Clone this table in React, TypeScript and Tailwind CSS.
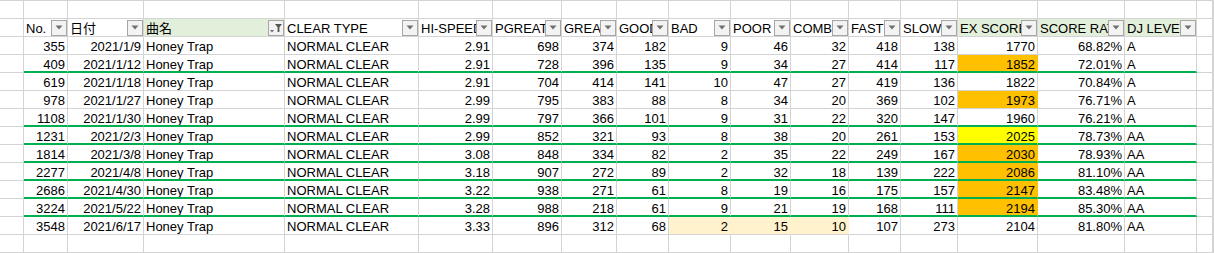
type Col = { label: string; right?: boolean; hl?: boolean; filtered?: boolean }

const COLS: Col[] = [
  { label: "No.", right: true },
  { label: "日付", right: true },
  { label: "曲名", hl: true, filtered: true },
  { label: "CLEAR TYPE" },
  { label: "HI-SPEED", right: true },
  { label: "PGREAT", right: true },
  { label: "GREAT", right: true },
  { label: "GOOD", right: true },
  { label: "BAD", right: true },
  { label: "POOR", right: true },
  { label: "COMBO BREAK", right: true },
  { label: "FAST", right: true },
  { label: "SLOW", right: true },
  { label: "EX SCORE", right: true, hl: true },
  { label: "SCORE RATE", right: true, hl: true },
  { label: "DJ LEVEL", hl: true },
]

type Row = { c: string[]; ex?: "orange" | "yellow"; tan?: boolean; line?: boolean }

const ROWS: Row[] = [
  { c: ["355", "2021/1/9", "Honey Trap", "NORMAL CLEAR", "2.91", "698", "374", "182", "9", "46", "32", "418", "138", "1770", "68.82%", "A"] },
  { c: ["409", "2021/1/12", "Honey Trap", "NORMAL CLEAR", "2.91", "728", "396", "135", "9", "34", "27", "414", "117", "1852", "72.01%", "A"], ex: "orange", line: true },
  { c: ["619", "2021/1/18", "Honey Trap", "NORMAL CLEAR", "2.91", "704", "414", "141", "10", "47", "27", "419", "136", "1822", "70.84%", "A"] },
  { c: ["978", "2021/1/27", "Honey Trap", "NORMAL CLEAR", "2.99", "795", "383", "88", "8", "34", "20", "369", "102", "1973", "76.71%", "A"], ex: "orange" },
  { c: ["1108", "2021/1/30", "Honey Trap", "NORMAL CLEAR", "2.99", "797", "366", "101", "9", "31", "22", "320", "147", "1960", "76.21%", "A"], line: true },
  { c: ["1231", "2021/2/3", "Honey Trap", "NORMAL CLEAR", "2.99", "852", "321", "93", "8", "38", "20", "261", "153", "2025", "78.73%", "AA"], ex: "yellow", line: true },
  { c: ["1814", "2021/3/8", "Honey Trap", "NORMAL CLEAR", "3.08", "848", "334", "82", "2", "35", "22", "249", "167", "2030", "78.93%", "AA"], ex: "orange", line: true },
  { c: ["2277", "2021/4/8", "Honey Trap", "NORMAL CLEAR", "3.18", "907", "272", "89", "2", "32", "18", "139", "222", "2086", "81.10%", "AA"], ex: "orange", line: true },
  { c: ["2686", "2021/4/30", "Honey Trap", "NORMAL CLEAR", "3.22", "938", "271", "61", "8", "19", "16", "175", "157", "2147", "83.48%", "AA"], ex: "orange", line: true },
  { c: ["3224", "2021/5/22", "Honey Trap", "NORMAL CLEAR", "3.28", "988", "218", "61", "9", "21", "19", "168", "111", "2194", "85.30%", "AA"], ex: "orange", line: true },
  { c: ["3548", "2021/6/17", "Honey Trap", "NORMAL CLEAR", "3.33", "896", "312", "68", "2", "15", "10", "107", "273", "2104", "81.80%", "AA"], tan: true },
]

const GRID =
  "grid grid-cols-[24px_44px_76px_141px_134px_74px_69px_55px_52px_62px_60px_58px_52px_57px_80px_87px_72px_16px_1fr] auto-rows-[18px]"

const blank = "h-[18px] border-r border-b border-r-[#d4d4d4] border-b-[#d4d4d4]"

function FilterButton({ active }: { active?: boolean }) {
  return (
    <span className="flex h-[16px] w-[16px] shrink-0 items-center justify-center self-center border border-[#a6a6a6] bg-[#f3f3f3]">
      {active ? (
        <svg width="14" height="12" viewBox="0 0 14 12">
          <path d="M1 8h4l-2 2.5z" fill="#6b6b6b" />
          <path d="M6 2h7l-2.6 3.2V10H8.6V5.2z" fill="#555" />
        </svg>
      ) : (
        <svg width="8" height="5" viewBox="0 0 8 5">
          <path d="M0.5 0.5h7L4 4.5z" fill="#707070" />
        </svg>
      )}
    </span>
  )
}

function EmptyRow() {
  return (
    <>
      {Array.from({ length: 19 }).map((_, i) => (
        <div key={i} className={blank} />
      ))}
    </>
  )
}

function HeaderRow() {
  return (
    <>
      <div className={blank} />
      {COLS.map((col) => (
        <div
          key={col.label}
          className={`flex h-[18px] items-start overflow-hidden border-r border-b border-r-[#d4d4d4] border-b-[#d4d4d4] pl-[2px] ${
            col.hl ? "bg-[#e2efda]" : "bg-white"
          }`}
        >
          <span className="min-w-0 flex-1 overflow-hidden whitespace-nowrap pt-[2px] leading-[16px]">{col.label}</span>
          <FilterButton active={col.filtered} />
        </div>
      ))}
      <div className={blank} />
      <div className={blank} />
    </>
  )
}

function DataRow({ row }: { row: Row }) {
  return (
    <>
      <div className={blank} />
      {row.c.map((v, i) => {
        const isEx = i === 13 && row.ex
        const isTan = row.tan && i >= 8 && i <= 10
        const fill = isEx ? (row.ex === "yellow" ? "bg-[#ffff00]" : "bg-[#ffc000]") : isTan ? "bg-[#fff2cc]" : ""
        const rightBorder = fill ? "border-r-transparent" : "border-r-[#d4d4d4]"
        const bottom = row.line ? "border-b-2 border-b-[#00b050]" : "border-b border-b-[#d4d4d4]"
        return (
          <div
            key={i}
            className={`h-[18px] overflow-hidden whitespace-nowrap border-r px-[2px] pt-[2px] leading-[16px] ${rightBorder} ${bottom} ${fill} ${
              COLS[i].right ? "text-right" : "text-left"
            }`}
          >
            {v}
          </div>
        )
      })}
      <div className={blank} />
      <div className={blank} />
    </>
  )
}

export default function App() {
  return (
    <div className="h-[253px] w-[1214px] overflow-hidden bg-white font-['Liberation_Sans','Noto_Sans_CJK_JP',sans-serif] text-[13px] text-black">
      <div className={`${GRID} border-t border-t-[#d4d4d4]`}>
        <EmptyRow />
        <HeaderRow />
        {ROWS.map((r) => (
          <DataRow key={r.c[0]} row={r} />
        ))}
        <EmptyRow />
      </div>
    </div>
  )
}
